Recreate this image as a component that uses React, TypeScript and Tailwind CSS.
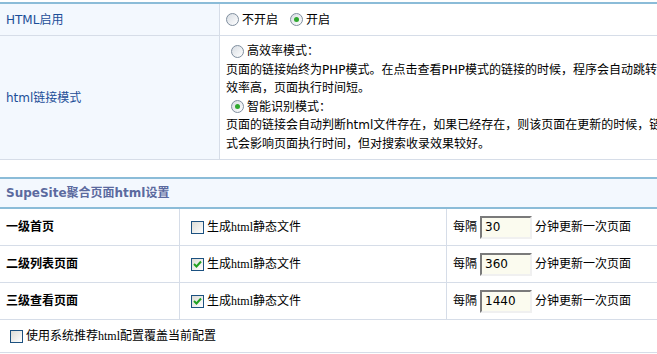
import React from 'react';

const sans = "font-['Tahoma','DejaVu_Sans','Noto_Sans_CJK_SC',sans-serif]";

function Radio({ checked }: { checked?: boolean }) {
  return (
    <span className="inline-flex items-center justify-center w-[13px] h-[13px] rounded-full border border-[#7f8e9e] bg-gradient-to-br from-[#d8dde3] to-white shrink-0">
      {checked && <span className="w-[5px] h-[5px] rounded-full bg-[#2fa82f]" />}
    </span>
  );
}

function Checkbox({ checked }: { checked?: boolean }) {
  return (
    <span className="inline-flex items-center justify-center w-[13px] h-[13px] border border-[#1c5180] bg-gradient-to-br from-[#dcdcd6] to-white shrink-0">
      {checked && (
        <svg width="9" height="8" viewBox="0 0 9 8">
          <path d="M1 4 L3.5 6.5 L8 1.5" fill="none" stroke="#21a121" strokeWidth="2" />
        </svg>
      )}
    </span>
  );
}

const pages = [
  { name: '一级首页', checked: false, minutes: '30' },
  { name: '二级列表页面', checked: true, minutes: '360' },
  { name: '三级查看页面', checked: true, minutes: '1440' },
];

export default function App() {
  return (
    <div className={`w-[657px] h-[354px] overflow-hidden bg-white text-[12px] text-black ${sans}`}>
      <div className="w-[820px] pt-[2px]">
        {/* HTML settings */}
        <div className="border-t-2 border-[#8bbcd8]">
          <div className="flex h-[32px] border-b border-[#d6dde8]">
            <div className="w-[220px] shrink-0 bg-[#f3f8fe] border-r border-[#d6dde8] px-[6px] flex items-center text-[#1c4e98]">
              HTML启用
            </div>
            <div className="flex items-center gap-[3px] pl-[6px]">
              <Radio />
              <span>不开启</span>
              <span className="w-[6px]" />
              <Radio checked />
              <span>开启</span>
            </div>
          </div>
          <div className="flex h-[124px] border-b border-[#d6dde8]">
            <div className="w-[220px] shrink-0 bg-[#f3f8fe] border-r border-[#d6dde8] px-[6px] flex items-center text-[#1c4e98]">
              html链接模式
            </div>
            <div className="pl-[6px] pt-[6px] leading-[18.5px] whitespace-nowrap">
              <div className="flex items-center gap-[3px] pl-[5px]">
                <Radio />
                <span>高效率模式：</span>
              </div>
              <div>页面的链接始终为PHP模式。在点击查看PHP模式的链接的时候，程序会自动跳转</div>
              <div>效率高，页面执行时间短。</div>
              <div className="flex items-center gap-[3px] pl-[5px]">
                <Radio checked />
                <span>智能识别模式：</span>
              </div>
              <div>页面的链接会自动判断html文件存在，如果已经存在，则该页面在更新的时候，链</div>
              <div>式会影响页面执行时间，但对搜索收录效果较好。</div>
            </div>
          </div>
        </div>

        <div className="h-[17px]" />

        {/* SupeSite aggregate pages */}
        <div className="border-t-2 border-[#8bbcd8]">
          <div className="h-[30px] bg-[#f3f8fe] border-b-2 border-[#8bbcd8] px-[6px] flex items-center font-bold text-[#5b6a9f]">
            SupeSite聚合页面html设置
          </div>
          {pages.map((p) => (
            <div key={p.name} className="flex h-[37px] border-b border-[#d6dde8]">
              <div className="w-[180px] shrink-0 border-r border-[#d6dde8] px-[6px] flex items-center font-bold">
                {p.name}
              </div>
              <div className="w-[267px] shrink-0 border-r border-[#d6dde8] pl-[11px] flex items-center gap-[3px]">
                <Checkbox checked={p.checked} />
                <span className="font-['Liberation_Serif','Noto_Sans_CJK_SC',serif]">生成html静态文件</span>
              </div>
              <div className="flex items-center pl-[6px] gap-[3px]">
                <span>每隔</span>
                <input
                  readOnly
                  value={p.minutes}
                  className="w-[52px] h-[23px] bg-[#fbfbef] border-2 border-t-[#7a7a7a] border-l-[#7a7a7a] border-b-[#f0f0f0] border-r-[#f0f0f0] pl-[3px] text-[12px] outline-none"
                />
                <span>分钟更新一次页面</span>
              </div>
            </div>
          ))}
          <div className="h-[33px] border-b border-[#d6dde8] pl-[10px] flex items-center gap-[3px]">
            <Checkbox />
            <span className="font-['Liberation_Serif','Noto_Sans_CJK_SC',serif]">使用系统推荐html配置覆盖当前配置</span>
          </div>
        </div>
      </div>
    </div>
  );
}
